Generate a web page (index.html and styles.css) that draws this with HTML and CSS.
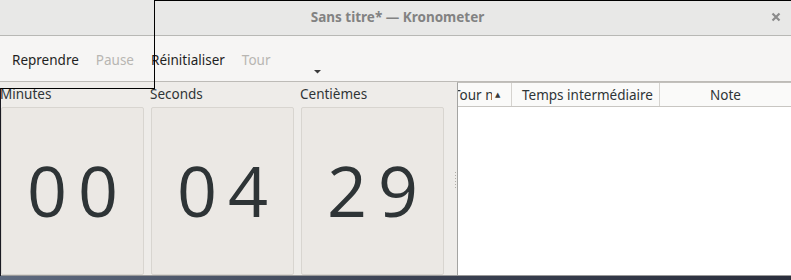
FILE: index.html
```html
<!DOCTYPE html>
<html lang="fr">
<head>
<meta charset="utf-8">
<title>Sans titre* — Kronometer</title>
<link rel="stylesheet" href="styles.css">
</head>
<body>
<div class="window">
  <header class="titlebar">
    <span class="title">Sans titre* — Kronometer</span>
    <span class="close">
      <svg width="10" height="10" viewBox="0 0 10 10"><path d="M1.5 1.5 L8.5 8.5 M8.5 1.5 L1.5 8.5" stroke="#8b8b8b" stroke-width="2.2" fill="none"/></svg>
    </span>
  </header>
  <nav class="toolbar">
    <span class="tbtn">Reprendre</span>
    <span class="tbtn disabled">Pause</span>
    <span class="tbtn">Réinitialiser</span>
    <span class="tbtn disabled">Tour</span>
    <span class="more">
      <svg width="8" height="4" viewBox="0 0 8 4"><path d="M0 0 H7 L3.5 3.5 Z" fill="#3b3b3b"/></svg>
    </span>
  </nav>
  <main class="main">
    <section class="timer">
      <div class="col">
        <div class="label">Minutes</div>
        <div class="box"><span>0</span><span>0</span></div>
      </div>
      <div class="col">
        <div class="label">Seconds</div>
        <div class="box"><span>0</span><span>4</span></div>
      </div>
      <div class="col">
        <div class="label">Centièmes</div>
        <div class="box"><span>2</span><span>9</span></div>
      </div>
    </section>
    <div class="handle"><span class="grip"></span></div>
    <section class="laps">
      <div class="thead">
        <div class="th c1"><span class="clip">Tour n°</span><span class="sort">▲</span></div>
        <div class="th c2">Temps intermédiaire</div>
        <div class="th c3">Note</div>
      </div>
      <div class="tbody"></div>
    </section>
  </main>
  <div class="desk"></div>
  <div class="outline"></div>
  <div class="outline2"></div>
</div>
</body>
</html>
```

FILE: styles.css
```css
* { box-sizing: border-box; }
html, body { margin: 0; padding: 0; }
body {
  width: 791px;
  height: 280px;
  overflow: hidden;
  font-family: "Noto Sans", "DejaVu Sans", sans-serif;
  color: #2e3436;
  background: #3a4150;
}
.window {
  position: relative;
  width: 791px;
  height: 280px;
  display: flex;
  flex-direction: column;
}
.titlebar {
  height: 36px;
  flex: none;
  background: #e8e8e7;
  border-bottom: 1px solid #b8b8b5;
  display: flex;
  align-items: center;
  justify-content: center;
  position: relative;
}
.title {
  font-weight: bold;
  font-size: 13.5px;
  color: #828282;
  margin-left: 4px;
  margin-top: -1px;
}
.close {
  position: absolute;
  right: 10px;
  top: 12px;
  width: 10px;
  height: 10px;
  display: flex;
}
.toolbar {
  height: 46px;
  flex: none;
  background: #f6f5f4;
  border-bottom: 1px solid #bdbbb7;
  display: flex;
  align-items: center;
  padding-left: 12px;
  padding-top: 3px;
  gap: 17px;
  position: relative;
  font-size: 13.5px;
}
.tbtn { color: #1f1f1f; }
.tbtn.disabled { color: #b8b6b2; }
.more {
  position: absolute;
  left: 314px;
  top: 34px;
  display: flex;
}
.main {
  height: 193px;
  flex: none;
  display: flex;
  background: #eeece9;
}
.timer {
  width: 455px;
  flex: none;
  display: grid;
  grid-template-columns: 143px 143px 143px;
  column-gap: 7px;
  padding-left: 1px;
}
.col { display: flex; flex-direction: column; }
.label {
  height: 25px;
  font-size: 13.5px;
  line-height: 24px;
  margin-left: -1px;
  color: #2e3436;
}
.box {
  flex: 1;
  background: #ebe8e4;
  border: 1px solid #d8d5d0;
  border-radius: 2px;
  display: flex;
  align-items: center;
  justify-content: center;
  gap: 11px;
  font-family: "Open Sans", "Noto Sans", sans-serif;
  font-weight: 400;
  font-size: 70px;
  color: #2e3436;
  line-height: 1;
  padding-bottom: 2px;
}
.handle {
  width: 2px;
  flex: none;
  position: relative;
}
.grip {
  position: absolute;
  left: 0;
  top: 90px;
  width: 1px;
  height: 18px;
  background: repeating-linear-gradient(to bottom, #b0aea9 0 1px, transparent 1px 3px);
}
.laps {
  flex: 1;
  background: #ffffff;
  border-left: 1px solid #a4a4a2;
  border-top: 1px solid #c2c0bc;
  display: flex;
  flex-direction: column;
}
.thead {
  height: 24px;
  display: flex;
  background: #fafaf9;
  border-bottom: 1px solid #c8c6c2;
  font-size: 13.5px;
}
.th {
  display: flex;
  align-items: center;
  border-right: 1px solid #d5d3cf;
  color: #2e3436;
  white-space: nowrap;
  overflow: hidden;
}
.c1 { width: 54px; position: relative; }
.clip { margin-left: -5px; width: 39px; overflow: hidden; flex: none; }
.sort { font-size: 7px; margin-left: 3px; color: #3a3a3a; }
.c2 { width: 148px; padding-left: 10px; }
.c3 { flex: 1; justify-content: center; border-right: none; }
.tbody { flex: 1; }
.desk {
  flex: 1;
  border-top: 1px solid #9a9a9a;
  background: linear-gradient(to right, #5e6a7f 0%, #3c4354 50%, #2b2f3d 100%);
}
.outline {
  position: absolute;
  left: 154px;
  top: 0;
  right: 0;
  height: 89px;
  border-top: 1px solid #000;
  border-left: 1px solid #000;
  pointer-events: none;
}
.outline2 {
  position: absolute;
  left: 0;
  top: 88px;
  width: 155px;
  height: 188px;
  border-top: 1px solid #000;
  border-left: 1px solid #1a1a22;
  pointer-events: none;
}
```
